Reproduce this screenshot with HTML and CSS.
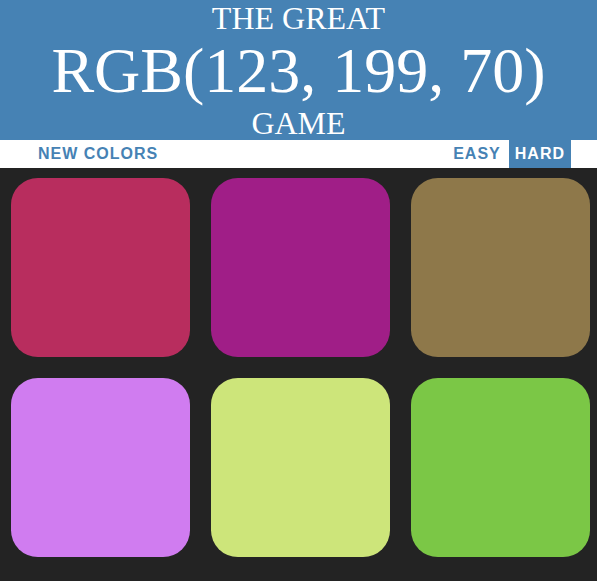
FILE: index.html
```html
<!DOCTYPE html>
<html>
<head>
<meta charset="utf-8">
<title>Color Game</title>
<link rel="stylesheet" href="styles.css">
</head>
<body>
<h1 class="title">
  <span class="title-line top">The Great</span>
  <span class="color-display">RGB(123, 199, 70)</span>
  <span class="title-line">Game</span>
</h1>
<div class="stripe">
  <button class="btn">New Colors</button>
  <span class="message"></span>
  <div class="modes">
    <button class="btn">Easy</button>
    <button class="btn selected">Hard</button>
  </div>
</div>
<div class="container">
  <div class="square sq1"></div>
  <div class="square sq2"></div>
  <div class="square sq3"></div>
  <div class="square sq4"></div>
  <div class="square sq5"></div>
  <div class="square sq6"></div>
</div>
</body>
</html>
```
FILE: styles.css
```css
html { overflow: hidden; }
body {
  margin: 0;
  background: #232323;
  font-family: "Liberation Serif", "Times New Roman", serif;
}
.title {
  margin: 0;
  height: 140px;
  background: #4682b4;
  color: #fff;
  text-align: center;
  text-transform: uppercase;
  font-weight: normal;
  font-size: 32px;
  line-height: 35px;
}
.title-line { display: block; }
.title-line.top { padding-top: 1px; }
.color-display {
  display: block;
  font-size: 64px;
  line-height: 70px;
}
.stripe {
  background: #fff;
  height: 28px;
  display: flex;
  align-items: stretch;
  justify-content: space-between;
  padding: 0 26px 0 32px;
}
.modes { display: flex; gap: 2px; }
.btn {
  border: none;
  background: none;
  margin: 0;
  padding: 0 6px 1px;
  font-family: "Liberation Sans", Arial, sans-serif;
  font-weight: 700;
  font-size: 16px;
  letter-spacing: 1px;
  text-transform: uppercase;
  color: #4682b4;
  height: 100%;
}
.btn.selected { background: #4682b4; color: #fff; }
.container {
  display: grid;
  grid-template-columns: repeat(3, 179px);
  grid-auto-rows: 179px;
  gap: 21px;
  padding: 10px 0 0 11px;
}
.square { border-radius: 15%; }
.sq1 { background: rgb(184, 45, 94); }
.sq2 { background: rgb(160, 30, 135); }
.sq3 { background: rgb(142, 120, 74); }
.sq4 { background: rgb(208, 124, 240); }
.sq5 { background: rgb(205, 229, 122); }
.sq6 { background: rgb(123, 199, 70); }
```
